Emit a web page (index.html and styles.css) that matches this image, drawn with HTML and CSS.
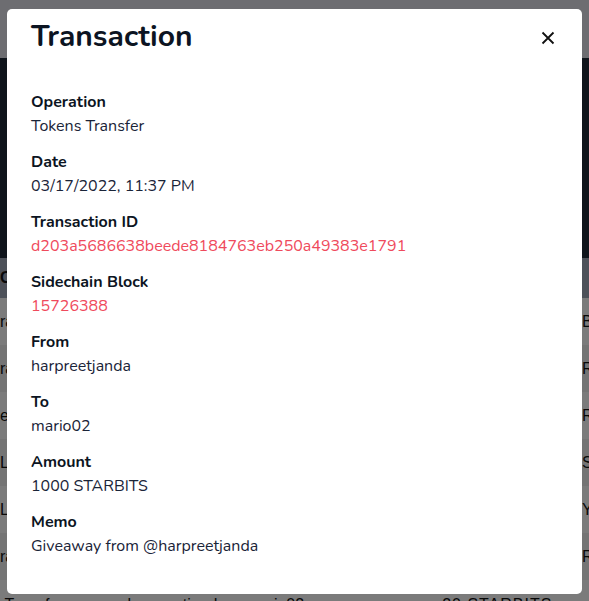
FILE: index.html
```html
<!DOCTYPE html>
<html lang="en">
<head>
<meta charset="utf-8">
<title>Transaction</title>
<link rel="stylesheet" href="styles.css">
</head>
<body>
<div class="page">
  <div class="topbar"></div>
  <div class="hero"></div>
  <div class="table">
    <div class="thead"><span class="c1">Co</span></div>
    <div class="row odd"><span class="c1">ra</span><span class="c2">BEE</span></div>
    <div class="row"><span class="c1">ra</span><span class="c2">RAIN</span></div>
    <div class="row odd"><span class="c1">el</span><span class="c2">RAIN</span></div>
    <div class="row"><span class="c1">Lo</span><span class="c2">SIM</span></div>
    <div class="row odd"><span class="c1">La</span><span class="c2">Y.</span></div>
    <div class="row"><span class="c1">ra</span><span class="c2">RAIN</span></div>
    <div class="row odd last"><span class="c1">t Transfer</span><span class="c4">harpreetjanda</span><span class="c5">mario02</span><span class="c6">20 STARBITS</span></div>
  </div>
  <div class="backdrop"></div>
</div>

<div class="modal">
  <div class="modal-header">
    <h2 class="modal-title">Transaction</h2>
    <button class="close" aria-label="Close">
      <svg width="14" height="14" viewBox="0 0 14 14"><path d="M1.5 1.5 L12.5 12.5 M12.5 1.5 L1.5 12.5" stroke="#111" stroke-width="1.8" fill="none"/></svg>
    </button>
  </div>
  <div class="modal-body">
    <div class="field"><div class="label">Operation</div><div class="value">Tokens Transfer</div></div>
    <div class="field"><div class="label">Date</div><div class="value">03/17/2022, 11:37 PM</div></div>
    <div class="field"><div class="label">Transaction ID</div><div class="value link">d203a5686638beede8184763eb250a49383e1791</div></div>
    <div class="field"><div class="label">Sidechain Block</div><div class="value link">15726388</div></div>
    <div class="field"><div class="label">From</div><div class="value">harpreetjanda</div></div>
    <div class="field"><div class="label">To</div><div class="value">mario02</div></div>
    <div class="field"><div class="label">Amount</div><div class="value">1000 STARBITS</div></div>
    <div class="field"><div class="label">Memo</div><div class="value">Giveaway from @harpreetjanda</div></div>
  </div>
</div>
</body>
</html>
```
FILE: styles.css
```css
* { box-sizing: border-box; }
html, body { margin: 0; padding: 0; }
body {
  width: 589px;
  height: 601px;
  overflow: hidden;
  font-family: "Nunito", "Noto Sans", "Open Sans", sans-serif;
  background: #fff;
}
.page {
  position: relative;
  width: 589px;
  height: 601px;
  overflow: hidden;
}
.topbar { height: 58px; background: #dadbe2; }
.hero { height: 200px; background: #1f2936; }
.table { font-family: "Liberation Sans", Arial, sans-serif; font-size: 16px; color: #111; }
.thead {
  height: 40px;
  background: #9aa3b2;
  display: flex;
  align-items: center;
  font-weight: bold;
}
.row {
  height: 47px;
  background: #e8e8e8;
  display: flex;
  align-items: center;
  white-space: nowrap;
}
.row.odd { background: #f6f6f6; }
.c1 { margin-left: 0; }
.c2 { margin-left: auto; width: 150px; margin-right: -143px; }
.last { align-items: flex-start; padding-top: 16px; }
.last .c1 { margin-left: -4px; }
.c4 { margin-left: 64px; }
.c5 { margin-left: 20px; }
.c6 { margin-left: 138px; letter-spacing: 1px; }
.backdrop {
  position: absolute;
  inset: 0;
  background: rgba(0, 0, 0, 0.5);
}

.modal {
  position: absolute;
  top: 9px;
  left: 7px;
  width: 575px;
  height: 585px;
  background: #fff;
  border-radius: 5px;
  color: #0d1626;
}
.modal-header {
  display: flex;
  align-items: center;
  justify-content: space-between;
  padding: 11px 24px 0 24px;
}
.modal-title {
  margin: 0;
  font-size: 30px;
  line-height: 34px;
  font-weight: 700;
  color: #0c1422;
}
.close {
  border: 0;
  background: none;
  padding: 0;
  margin-right: 3px;
  margin-top: 2px;
  width: 14px;
  height: 14px;
  display: flex;
}
.modal-body {
  padding: 36px 24px 0 24px;
}
.field { margin-bottom: 12px; }
.label {
  font-size: 16px;
  line-height: 24px;
  font-weight: 700;
  color: #0c1422;
}
.value {
  font-size: 16px;
  line-height: 24px;
  color: #1a2438;
}
.value.link { color: #ef4a5c; }
```
